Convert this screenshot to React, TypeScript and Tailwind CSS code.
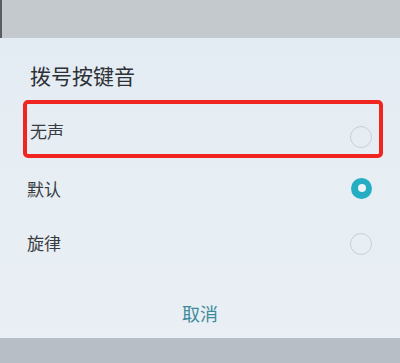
import { useState } from 'react';

const options = ['无声', '默认', '旋律'];

function Radio({ checked }: { checked: boolean }) {
    if (checked) {
        return (
            <span className="flex w-[21px] h-[21px] items-center justify-center rounded-full bg-[#25adc4]">
                <span className="w-[8px] h-[8px] rounded-full bg-[#eef3f7]" />
            </span>
        );
    }
    return <span className="block w-[22px] h-[22px] rounded-full border-[1.5px] border-[#c9cfd5]" />;
}

export default function App() {
    const [selected, setSelected] = useState(1);

    return (
        <div className="w-[400px] h-[363px] flex flex-col overflow-hidden bg-[#e7eef4] font-['Noto_Sans_CJK_SC',sans-serif]">
            {/* dimmed screen above the dialog */}
            <div className="h-[38px] shrink-0 bg-[#c4c9ce] border-l-2 border-[#5a5e63]" />

            <div className="flex-1 flex flex-col bg-gradient-to-b from-[#e4ecf3] to-[#e9eff4]">
                <div className="h-[62px] flex items-center pl-[30px] pt-[12px]">
                    <h2 className="text-[21px] leading-none text-[#2e3236]">拨号按键音</h2>
                </div>

                <div className="pl-[23px] pr-[17px]">
                    {options.map((label, index) => (
                        <button
                            key={label}
                            onClick={() => setSelected(index)}
                            className={`w-full flex items-center justify-between text-left
                                ${index === 0
                                    ? 'h-[58px] border-4 border-[#f0251f] rounded-[5px] pl-[3px] pr-[7px] mb-[3px]'
                                    : 'h-[54px] pl-[4px] pr-[11px]'
                                }`}
                        >
                            <span className={`text-[17px] leading-none text-[#383c40] ${index === 0 ? 'mt-[2px]' : ''}`}>
                                {label}
                            </span>
                            <span className={index === 0 ? 'mt-[16px]' : index === 2 ? 'mt-[4px]' : ''}>
                                <Radio checked={selected === index} />
                            </span>
                        </button>
                    ))}
                </div>

                <div className="flex-1 flex items-center justify-center pt-[18px]">
                    <span className="text-[18px] leading-none text-[#3d8b9b]">取消</span>
                </div>
            </div>

            {/* dimmed screen below */}
            <div className="h-[25px] shrink-0 bg-[#b7bec6]" />
        </div>
    );
}
